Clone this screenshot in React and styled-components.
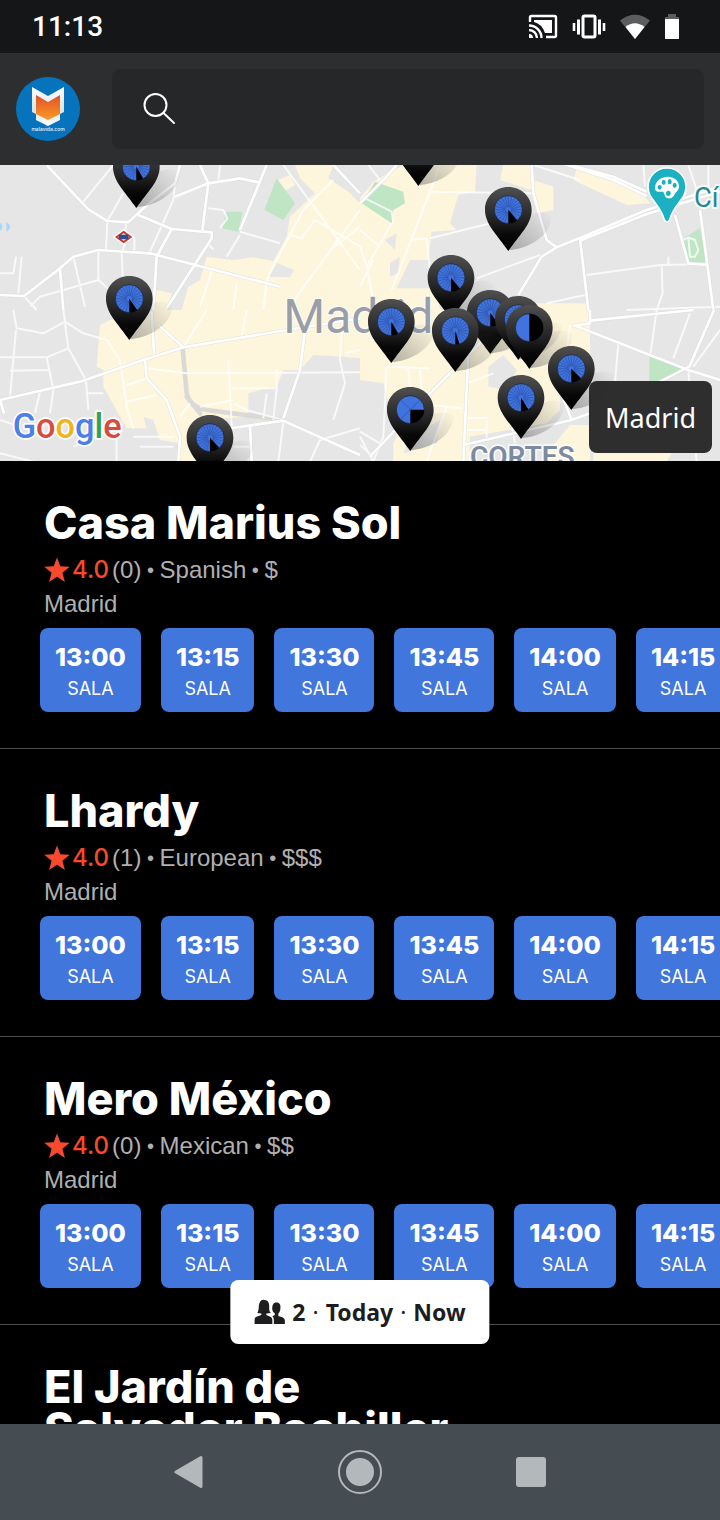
import React from "react";
import styled, { createGlobalStyle } from "styled-components";

const GlobalStyle = createGlobalStyle`
  *, *::before, *::after { box-sizing: border-box; }
  body {
    margin: 0;
    background: #000;
    color: #fff;
    font-family: Inter, "Liberation Sans", sans-serif;
  }
  button, input { font: inherit; color: inherit; border: 0; margin: 0; }
  button { cursor: pointer; }
`;

const Screen = styled.div`
  display: flex;
  flex-direction: column;
  height: 100vh;
`;

/* ---------- status bar ---------- */

const StatusBar = styled.div`
  display: flex;
  flex: none;
  align-items: center;
  justify-content: space-between;
  height: 53px;
  padding: 0 40px 0 32px;
  background: #151618;
`;

const Clock = styled.time`
  font: 500 28px/32px Roboto, sans-serif;
`;

const StatusIcons = styled.div`
  display: flex;
  align-items: center;
  gap: 14px;
  svg { display: block; }
`;

/* ---------- header ---------- */

const Header = styled.header`
  display: flex;
  flex: none;
  align-items: center;
  gap: 32px;
  height: 112px;
  padding: 0 16px;
  background: #2d2e30;
`;

const AvatarButton = styled.button`
  flex: none;
  width: 64px;
  height: 64px;
  padding: 0;
  border-radius: 50%;
  background: none;
  svg { display: block; }
`;

const SearchBox = styled.label`
  display: flex;
  flex: 1;
  align-items: center;
  gap: 16px;
  height: 80px;
  padding: 0 30px;
  border-radius: 8px;
  background: #262728;
`;

const SearchInput = styled.input`
  flex: 1;
  min-width: 0;
  padding: 0;
  background: transparent;
  outline: none;
  font-size: 24px;
`;

/* ---------- map ---------- */

const MapArea = styled.section`
  position: relative;
  flex: none;
  height: 296px;
  background: #e6e6e6;
  overflow: hidden;
`;

const MapCanvas = styled.svg`
  display: block;
  width: 100%;
  height: 100%;
`;

const CityButton = styled.button`
  position: absolute;
  right: 8px;
  bottom: 8px;
  height: 72px;
  padding: 0 16px;
  border-radius: 8px;
  background: rgba(42, 42, 43, 0.98);
  font-family: "Noto Sans", sans-serif;
  font-size: 27px;
`;

/* ---------- restaurant list ---------- */

const ListArea = styled.main`
  position: relative;
  flex: 1;
  min-height: 0;
`;

const List = styled.ul`
  height: 100%;
  margin: 0;
  padding: 0;
  list-style: none;
  overflow-y: auto;
  scrollbar-width: none;
`;

const Card = styled.li`
  padding: 41px 0 36px;
  border-bottom: 1px solid #4b4b4b;
`;

const CardText = styled.div`
  padding: 0 44px;
`;

const CardTitle = styled.h2`
  max-width: 460px;
  margin: 0 0 9px;
  font-size: 45px;
  line-height: 42px;
  font-weight: 800;
`;

const MetaLine = styled.p`
  display: flex;
  align-items: center;
  margin: 0;
  font: 400 24px/34px "Liberation Sans", sans-serif;
  color: #b0b0b0;
  white-space: pre;
  svg { display: block; margin-right: 2px; }
`;

const Rating = styled.span`
  margin-right: 3px;
  font-family: Inter, sans-serif;
  font-weight: 500;
  font-size: 24px;
  color: #f9492f;
`;

const Dot = styled.span`
  font-size: 20px;
`;

const SlotRow = styled.div`
  display: flex;
  gap: 20px;
  margin-top: 7px;
  padding-left: 40px;
  overflow-x: auto;
  scrollbar-width: none;
`;

const Slot = styled.button`
  display: flex;
  flex: none;
  flex-direction: column;
  align-items: center;
  justify-content: center;
  gap: 2px;
  height: 84px;
  padding: 6px 15px 0;
  border-radius: 8px;
  background: #4176dc;
  line-height: 30px;
`;

const SlotTime = styled.span`
  font-size: 25px;
  font-weight: 800;
`;

const SlotRoom = styled.span`
  font-size: 18px;
`;

const FilterPill = styled.button`
  position: absolute;
  left: 50%;
  bottom: 80px;
  transform: translateX(-50%);
  display: flex;
  align-items: center;
  gap: 7px;
  height: 64px;
  padding: 0 24px;
  border-radius: 8px;
  background: #fff;
  color: #1d1d1f;
  font: 700 23px/30px "Noto Sans", sans-serif;
  white-space: nowrap;
`;

const PillDot = styled.span`
  font-weight: 400;
`;

/* ---------- navigation bar ---------- */

const NavBar = styled.nav`
  display: grid;
  flex: none;
  grid-template-columns: repeat(3, 1fr);
  height: 96px;
  padding: 0 104px;
  background: #454c52;
`;

const NavButton = styled.button`
  display: grid;
  place-items: center;
  padding: 0;
  background: none;
`;

/* ---------- drawings ---------- */

const CastIcon = () => (
  <svg width="30" height="26" viewBox="0 0 30 26" fill="none" aria-hidden="true">
    <path d="M2 8V3.500Q2 2 3.500 2H26.500Q28 2 28 3.500V21.500Q28 23 26.500 23H18" stroke="#fff" strokeWidth="2.400" />
    <path d="M6 6H24V19H17Q14 10 6 8Z" fill="#fff" />
    <path d="M1 11.500A12.500 12.500 0 0 1 13.500 24M1 16A8 8 0 0 1 9 24" stroke="#fff" strokeWidth="2.400" />
    <path d="M1 20A4 4 0 0 1 5 24H1Z" fill="#fff" />
  </svg>
);

const VibrateIcon = () => (
  <svg width="34" height="26" viewBox="0 0 34 26" fill="none" stroke="#fff" aria-hidden="true">
    <rect x="11" y="2" width="12" height="21" rx="1.500" strokeWidth="3" />
    <path d="M2 9V17M32 9V17" strokeWidth="2.600" />
    <path d="M6.500 5.500V20.500M27.500 5.500V20.500" strokeWidth="3" />
  </svg>
);

const WifiIcon = () => (
  <svg width="30" height="26" viewBox="0 0 30 26" aria-hidden="true">
    <path d="M0 6.500Q15 -5 30 6.500L15 25Z" fill="#5c5d5f" />
    <path d="M5.500 13Q15 5.500 24.500 13L15 25Z" fill="#fff" />
  </svg>
);

const BatteryIcon = () => (
  <svg width="16" height="28" viewBox="0 0 16 28" aria-hidden="true">
    <path d="M4 1H12V4H15V9H1V4H4Z" fill="#5c5d5f" />
    <rect x="1" y="6" width="14" height="20" fill="#fff" />
  </svg>
);

const Logo = () => (
  <svg width="64" height="64" viewBox="0 0 64 64" aria-hidden="true">
    <defs>
      <linearGradient id="flame" x1="0" y1="0" x2="0" y2="1">
        <stop offset="0" stopColor="#e2502c" />
        <stop offset="1" stopColor="#fa9a22" />
      </linearGradient>
      <linearGradient id="shield" x1="0" y1="0" x2="0" y2="1">
        <stop offset="0" stopColor="#fff" />
        <stop offset="0.600" stopColor="#d9e3ea" />
        <stop offset="1" stopColor="#fff" />
      </linearGradient>
    </defs>
    <circle cx="32" cy="32" r="32" fill="#0673bd" />
    <path d="M16 10L32 19L48 10V35L44 37V43L32 49L20 43V37L16 35Z" fill="url(#shield)" />
    <path d="M20 18L32 25L44 18V37L32 43L20 37Z" fill="url(#flame)" />
    <text x="32" y="54" textAnchor="middle" fill="#e6f3fb" fontFamily="Inter, sans-serif" fontSize="5" fontWeight="500">
      malavida.com
    </text>
  </svg>
);

const SearchIcon = () => (
  <svg width="34" height="34" viewBox="0 0 34 34" fill="none" stroke="#fff" strokeWidth="2" strokeLinecap="round" aria-hidden="true">
    <circle cx="13.500" cy="13" r="11" />
    <path d="M21.500 21L32 31" />
  </svg>
);

const StarIcon = () => (
  <svg width="26" height="26" viewBox="0 0 26 26" aria-hidden="true">
    <path d="M13 0.500L16.300 9.300L25.700 9.800L18.400 15.700L20.900 25L13 19.800L5.100 25L7.600 15.700L0.300 9.800L9.700 9.300Z" fill="#f9492f" />
  </svg>
);

const PeopleIcon = () => (
  <svg width="31" height="26" viewBox="0 0 31 26" fill="#1d1d1f" aria-hidden="true">
    <path d="M3 14C5 11 4 7 5 4.500C6 1 8.500 0.500 10 1C13 0.500 14.500 3 14.800 6C15 10 14.500 12 16.500 14L12 14.500V16L16.500 18Q18 19 18 21V25H0V21Q0 19 1.500 18L7 16V14.500Z" />
    <path d="M18 11C17.500 6 19 3.500 22 3.500C25.500 3.500 26.500 6 26 9.500C26 12 25 13.500 24 14.500V17L28.500 18.500Q30.500 19.500 30.500 21.500V25H19.500V21Q19.500 18.500 18 17.200L20.500 16V14.500Q18.500 13.500 18 11Z" />
  </svg>
);

const rays = Array.from({ length: 24 }, (_, i) => (i * Math.PI) / 12);

/* Drawn with its origin in the middle of the pin's head; `wedge` is where the dark slice begins, clockwise from the top. */
const Pin = ({ x, y, wedge = 140 }) => {
  const angle = (wedge * Math.PI) / 180;
  return (
    <g transform={`translate(${x} ${y})`}>
      <path d="M2 120C80 112 128 65 130 18C115 2 80 2 50 20Z" fill="url(#pinShadow)" />
      <path d="M0 -70C40 -70 70 -40 70 -2C70 42 34 72 0 122C-34 72 -70 42 -70 -2C-70 -40 -40 -70 0 -70Z" fill="url(#pinBody)" />
      <circle cy="-2" r="42" fill="#4073dd" stroke="#171c2b" strokeWidth="2" />
      {wedge > 95 &&
        rays.map((a) => (
          <line
            key={a}
            x1={Math.cos(a) * 8}
            y1={Math.sin(a) * 8 - 2}
            x2={Math.cos(a) * 41}
            y2={Math.sin(a) * 41 - 2}
            stroke="#2c50a3"
            strokeWidth="2"
          />
        ))}
      {wedge === 90 && <path d="M-29 -31L0 -2L29 -31M0 -2L-29 27" fill="none" stroke="#2c50a3" strokeWidth="2" />}
      <path d={`M0 -2L${Math.sin(angle) * 42} ${-2 - Math.cos(angle) * 42}A42 42 0 0 1 0 40Z`} fill="#000" />
    </g>
  );
};

const pins = [
  { x: 409, y: 7, wedge: 150 },
  { x: 388, y: 403, wedge: 145 },
  { x: 630, y: 820, wedge: 138 },
  { x: 1255, y: -59 },
  { x: 1525, y: 136 },
  { x: 1353, y: 340 },
  { x: 1471, y: 445, wedge: 145 },
  { x: 1555, y: 463 },
  { x: 1174, y: 472, wedge: 150 },
  { x: 1366, y: 499, wedge: 163 },
  { x: 1588, y: 490, wedge: 0 },
  { x: 1714, y: 613, wedge: 135 },
  { x: 1563, y: 700, wedge: 148 },
  { x: 1231, y: 736, wedge: 90 },
];

/* The map is made of four tiles, each with its own origin. */
const tiles = [
  {
    origin: "0 -15",
    shops: [
      "885,15 1000,15 985,55 1045,95 1080,130 1080,450 545,450 565,380 600,360 620,290 700,300 760,292 820,303 860,230 870,170 945,100 900,55",
      "835,60 870,45 885,75 850,95",
      "470,390 515,400 500,450 465,450",
    ],
    blocks: ["830,308 882,330 870,352 805,350"],
    parks: ["830,55 885,130 850,180 793,150", "680,155 728,155 715,215 665,205"],
    rail: [],
    main: "M140 15L265 148L322 183L385 187L435 140L525 70L540 15M415 165L515 207L635 217V235L500 445M0 405L72 408L180 325L220 290L295 270L450 280L840 380M460 450L470 290L515 207M180 325L190 450M600 15L625 70L607 210M525 110L625 70L720 55L780 68M800 15L720 210M1000 15L1080 100",
    minor: "M340 15L250 125M370 100L322 183L318 270M525 70L520 120L450 275M378 190L375 250L365 280L368 350M403 230V270M295 270V360L340 400M220 290L255 440M72 408L110 450M90 440L120 410L295 360M625 145L670 150L682 175L660 205M720 215L840 250M720 225L680 290M660 15L655 65M850 15L1080 330M1000 60L910 150L830 300L800 360L790 450M0 340H40L48 290M65 290L55 400M870 225L905 235L945 180L1080 260M985 275L1080 200M710 370L700 450M1080 150L860 450M620 250L640 268M640 320L600 440",
  },
  {
    origin: "0 435",
    shops: [
      "465,0 1030,0 1030,140 940,135 900,180 850,180 830,230 780,240 745,250 745,320 600,330 600,455 540,455 540,400 480,390 460,330 430,320 440,355 380,355 310,230 310,180 290,170 300,45 330,30",
      "1030,0 1080,0 1080,145 1030,140",
    ],
    blocks: [],
    parks: [],
    rail: ["M548 115L560 250Q570 292 620 300L850 330M600 310L560 260"],
    main: "M0 270L240 215L430 150L550 112L860 60L1080 25M435 150L440 205L500 270L540 380L535 455M455 5L462 130M475 45L550 112M915 60L900 180L850 325M690 355L850 332L1080 435M750 345L755 455M0 270L12 310",
    minor: "M40 0L50 55L130 70L195 35L190 0M195 35L250 70L320 90L360 150L380 290L400 355M48 60L30 260M0 142H140L205 115L195 40M140 142L160 240L150 310M30 182L145 180M205 115L258 210L265 300M265 250H310M120 245L105 310M380 225L440 205M380 275L470 255M440 175L560 190L1080 187M685 150L695 350M695 235H830L820 330M800 250L790 325M830 180V250M620 0L550 112M740 0L725 80M700 280L740 300L850 330M600 290L700 270M1030 0L1020 150L1035 220L1000 330M1080 120L1035 130M400 380H520M420 410H520M0 430L100 455M350 380L350 455M0 330L60 350M220 410L330 360M850 335L835 455M1080 355L960 390L930 455M540 320L570 280M700 410H750",
  },
  {
    origin: "1080 -15",
    shops: [
      "0,115 40,65 130,15 350,15 345,95 295,105 270,190 290,210 215,215 205,300 150,300 110,385 230,385 240,450 0,450",
      "430,15 515,15 520,60 580,80 580,150 530,160 515,90 420,60",
      "650,25 700,30 850,105 870,130 800,135 640,60",
      "400,430 680,430 680,450 400,450",
    ],
    blocks: ["75,240 110,220 105,270", "90,310 120,290 115,340 90,350"],
    parks: ["45,65 130,95 135,130 100,150 95,190 5,130", "970,235 1020,205 1040,305 985,310"],
    rail: [],
    main: "M630 15L760 50L860 95M600 8L760 60L860 108M515 15L520 100L560 240L590 262L665 232L860 150L1080 80M665 240L860 162L1080 95M590 262L545 290L475 405M660 235L685 450M945 165L985 310L1045 315M1020 150L1060 450M0 130L75 55L110 15",
    minor: "M350 355L540 285M560 430L675 405M210 235L410 185M215 95L515 100M95 390L210 95L240 15M150 240L200 235M60 60L25 15M5 110L95 155L100 190M0 260L20 320L45 450M20 320L95 190M680 345L900 315L1045 312M905 315L908 400L890 450M925 290V312M850 15L855 80M200 235L215 380M520 15L660 60M0 210L60 260M970 240L985 232L1005 240L1015 270L1005 290H990L985 232M1045 15V80M800 450L1080 440M40 300L0 380M980 0L1010 90",
  },
  {
    origin: "1080 435",
    shops: [
      "0,0 690,0 690,130 600,200 600,300 560,340 330,380 330,455 100,455 100,400 110,380 70,220 0,210",
      "700,400 940,420 920,455 700,455",
      "630,345 690,345 690,455 540,455",
    ],
    blocks: ["385,170 430,135 470,180 440,240 385,230", "150,380 240,330 230,400 130,430", "690,0 1080,0 1080,455 940,455 960,410 690,400"],
    parks: ["868,135 985,178 900,220 868,215"],
    rail: [],
    main: "M640 45L985 180L1080 210M690 0V40L640 48M1062 0L988 170L900 215M690 32L1000 0M380 80L210 250L30 440M325 130L310 455M690 310L635 330L310 405M635 330L600 240",
    minor: "M870 140L890 0M940 145L990 10M775 100L765 215M80 170L70 380L40 455M80 170L210 175M145 170L150 240M180 180L185 240M0 365L60 400M630 45L620 130M310 325H380M310 360H380M380 330V385M210 285L305 295M0 405L40 440M0 380L40 455M320 220L400 190M985 180L1010 455M455 340L465 400M260 290L200 455M1000 170L1080 60M30 90H130",
  },
];

const CityMap = () => (
  <MapCanvas viewBox="0 0 2160 888" preserveAspectRatio="xMidYMid slice" role="img" aria-label="Madrid">
    <defs>
      <linearGradient id="pinBody" x1="0" y1="0" x2="0" y2="1">
        <stop offset="0" stopColor="#505050" />
        <stop offset="0.500" stopColor="#242424" />
        <stop offset="0.750" stopColor="#080808" />
        <stop offset="1" stopColor="#000" />
      </linearGradient>
      <linearGradient id="pinShadow" x1="0" y1="1" x2="1" y2="0">
        <stop offset="0" stopColor="#444" stopOpacity="0.400" />
        <stop offset="0.600" stopColor="#555" stopOpacity="0.160" />
        <stop offset="1" stopColor="#666" stopOpacity="0" />
      </linearGradient>
    </defs>
    {tiles.map((tile) => (
      <g key={tile.origin} transform={`translate(${tile.origin})`} strokeLinejoin="round" strokeLinecap="round">
        {tile.shops.map((p) => <polygon key={p} points={p} fill="#fdf6dc" />)}
        {tile.blocks.map((p) => <polygon key={p} points={p} fill="#e6e6e6" />)}
        {tile.parks.map((p) => <polygon key={p} points={p} fill="#bfe5c4" />)}
        {tile.rail.map((p) => <path key={p} d={p} fill="none" stroke="#dad9d6" strokeWidth="14" />)}
      </g>
    ))}
    {tiles.map((tile) => (
      <g key={tile.origin} transform={`translate(${tile.origin})`} fill="none" strokeLinejoin="round">
        <path d={tile.minor} stroke="#fff" strokeOpacity="0.750" strokeWidth="6" />
        <path d={tile.main} stroke="#d8d8d8" strokeOpacity="0.700" strokeWidth="11" />
        <path d={tile.main} stroke="#fff" strokeWidth="8" />
      </g>
    ))}
    <path d="M0 172Q14 186 0 198ZM18 172Q42 184 20 200Z" fill="#a9d8f5" />
    <g transform="translate(371 216)">
      <path d="M-28 0L0 -20L28 0L0 20Z" fill="#fff" stroke="#fff" strokeWidth="6" />
      <path d="M-21 0L0 -15L21 0L0 15Z" fill="#fff" stroke="#c8392d" strokeWidth="6" />
      <rect x="-14" y="-7" width="28" height="14" fill="#2a4f93" />
    </g>
    <g fontFamily="Roboto, sans-serif" stroke="#fff" strokeOpacity="0.800" paintOrder="stroke" strokeLinejoin="round">
      <text x="850" y="503" fontSize="144" fill="#9a9ea8" strokeWidth="6">Madrid</text>
      <text x="1410" y="903" fontSize="84" fontWeight="600" fill="#7d8ba0" strokeWidth="10">CORTES</text>
      <text x="2082" y="125" fontSize="82" fill="#1f8a94" strokeWidth="12">Cí</text>
    </g>
    <g transform="translate(2001 66)">
      <path d="M0 -57C32 -57 57 -32 57 0C57 38 22 48 8 98Q0 112 -8 98C-22 48 -57 38 -57 0C-57 -32 -32 -57 0 -57Z" fill="#1bb0c2" stroke="#fff" strokeWidth="5" />
      <path d="M-36 4C-36 -16 -20 -31 2 -31C26 -31 36 -14 36 -2C36 10 28 14 24 20C18 30 16 34 4 34C-10 32 -6 18 -12 14C-20 14 -36 18 -36 4Z" fill="#fff" />
      <g fill="#1bb0c2">
        <ellipse cx="-22" cy="1" rx="6" ry="7" />
        <ellipse cx="-10" cy="-14" rx="6" ry="8" />
        <ellipse cx="8" cy="-16" rx="6" ry="8" />
        <ellipse cx="23" cy="-5" rx="6" ry="8" />
        <ellipse cx="4" cy="19" rx="7" ry="8" />
      </g>
    </g>
    {pins.map((pin) => <Pin key={`${pin.x}-${pin.y}`} {...pin} />)}
    <text x="38" y="820" fontFamily="Roboto, sans-serif" fontWeight="500" fontSize="103" stroke="#fff" strokeWidth="10" strokeLinejoin="round" paintOrder="stroke">
      <tspan fill="#4a80e8">G</tspan>
      <tspan fill="#d84b3e">o</tspan>
      <tspan fill="#efb420">o</tspan>
      <tspan fill="#4a80e8">g</tspan>
      <tspan fill="#36a156">l</tspan>
      <tspan fill="#d84b3e">e</tspan>
    </text>
  </MapCanvas>
);

const times = ["13:00", "13:15", "13:30", "13:45", "14:00", "14:15"];

const restaurants = [
  { name: "Casa Marius Sol", reviews: 0, cuisine: "Spanish", price: "$" },
  { name: "Lhardy", reviews: 1, cuisine: "European", price: "$$$" },
  { name: "Mero México", reviews: 0, cuisine: "Mexican", price: "$$" },
  { name: "El Jardín de Salvador Bachiller", reviews: 0, cuisine: "Spanish", price: "$$" },
];

const Restaurant = ({ name, reviews, cuisine, price }) => (
  <Card>
    <CardText>
      <CardTitle>{name}</CardTitle>
      <MetaLine>
        <StarIcon />
        <Rating>4.0</Rating>
        <span>{`(${reviews})`}</span>
        <Dot>{" • "}</Dot>
        <span>{cuisine}</span>
        <Dot>{" • "}</Dot>
        <span>{price}</span>
      </MetaLine>
      <MetaLine>Madrid</MetaLine>
    </CardText>
    <SlotRow>
      {times.map((time) => (
        <Slot key={time} type="button">
          <SlotTime>{time}</SlotTime>
          <SlotRoom>SALA</SlotRoom>
        </Slot>
      ))}
    </SlotRow>
  </Card>
);

export default function App() {
  return (
    <Screen>
      <GlobalStyle />
      <StatusBar>
        <Clock>11:13</Clock>
        <StatusIcons>
          <CastIcon />
          <VibrateIcon />
          <WifiIcon />
          <BatteryIcon />
        </StatusIcons>
      </StatusBar>
      <Header>
        <AvatarButton type="button" aria-label="Profile">
          <Logo />
        </AvatarButton>
        <SearchBox>
          <SearchIcon />
          <SearchInput type="text" aria-label="Search" />
        </SearchBox>
      </Header>
      <MapArea>
        <CityMap />
        <CityButton type="button">Madrid</CityButton>
      </MapArea>
      <ListArea>
        <List>
          {restaurants.map((r) => <Restaurant key={r.name} {...r} />)}
        </List>
        <FilterPill type="button">
          <PeopleIcon />
          <span>2</span>
          <PillDot>·</PillDot>
          <span>Today</span>
          <PillDot>·</PillDot>
          <span>Now</span>
        </FilterPill>
      </ListArea>
      <NavBar>
        <NavButton type="button" aria-label="Back">
          <svg width="30" height="34" viewBox="0 0 30 34">
            <path d="M2 17L27 2.500V31.500Z" fill="#b3b8bb" stroke="#b3b8bb" strokeWidth="3" strokeLinejoin="round" />
          </svg>
        </NavButton>
        <NavButton type="button" aria-label="Home">
          <svg width="44" height="44" viewBox="0 0 44 44">
            <circle cx="22" cy="22" r="21" fill="none" stroke="#b3b8bb" strokeWidth="2" />
            <circle cx="22" cy="22" r="14" fill="#b3b8bb" />
          </svg>
        </NavButton>
        <NavButton type="button" aria-label="Recent apps">
          <svg width="30" height="30" viewBox="0 0 30 30">
            <rect width="30" height="30" rx="3" fill="#b3b8bb" />
          </svg>
        </NavButton>
      </NavBar>
    </Screen>
  );
}
